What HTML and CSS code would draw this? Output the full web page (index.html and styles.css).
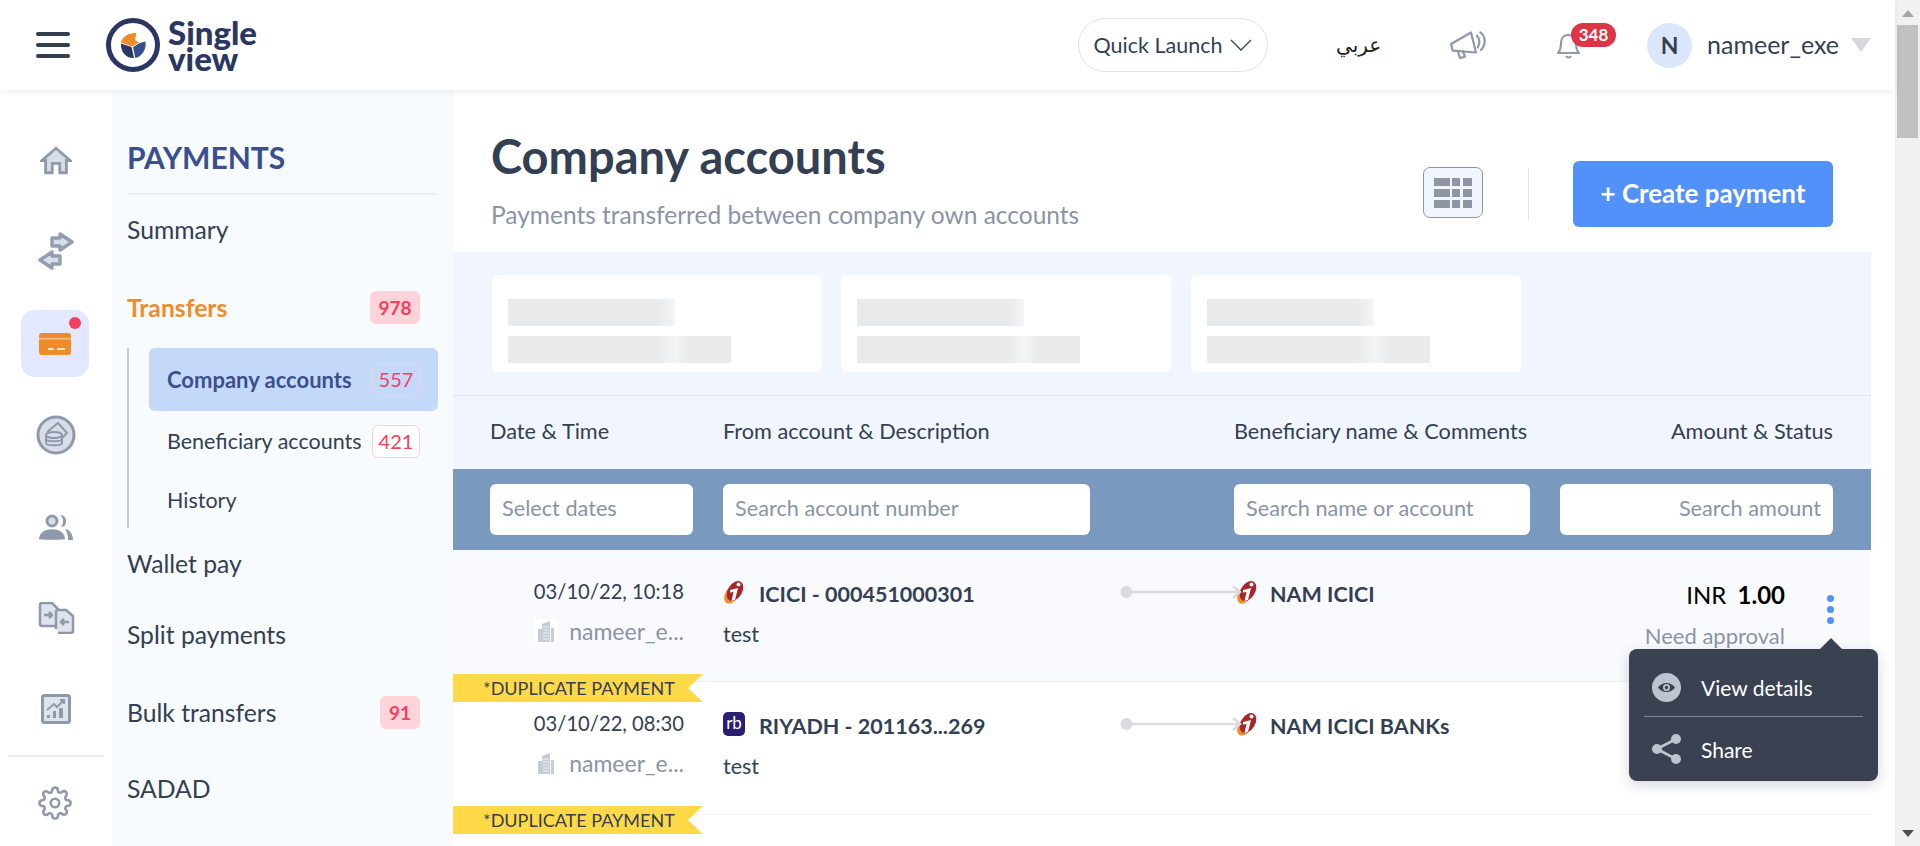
FILE: index.html
```html
<!DOCTYPE html>
<html lang="en">
<head>
  <meta charset="UTF-8">
  <title>Single View - Company accounts</title>
  <link rel="stylesheet" href="styles.css">
</head>
<body>
  <div class="viewport">
    <div class="page">
      <!-- top bar -->
      <header class="topbar">
        <div class="burger"><span></span><span></span><span></span></div>
        <div class="logo">
          <svg width="56" height="56" viewBox="0 0 56 56">
            <circle cx="28" cy="28" r="24.5" fill="none" stroke="#2a3663" stroke-width="5"/>
            <path d="M16 25.5 C17 19.5 24 15.5 31.5 16 L30 23 L34 25.5 L27 29.5 Z" fill="#ee8c2b"/>
            <path d="M16 26.5 L26.5 30 L29 41 C21 41.5 15.5 35 16 26.5 Z" fill="#2a3663"/>
            <path d="M34.5 26 L40.3 24.5 C42 31 37.5 39.5 30.3 41 L28 30.3 Z" fill="#35508f"/>
          </svg>
          <div class="logo-text">Single<br>view</div>
        </div>
        <div class="top-right">
          <div class="quick">Quick Launch
            <svg width="22" height="12" viewBox="0 0 22 12"><path d="M1 1 L11 11 L21 1" fill="none" stroke="#333f53" stroke-width="1.3"/></svg>
          </div>
          <div class="lang">عربي</div>
          <svg class="megaphone" width="37" height="28" viewBox="0 0 37 28" fill="none" stroke="#8e99ab" stroke-width="2.2" stroke-linejoin="round" stroke-linecap="round">
            <path d="M1 13 L21 1.5 L26 21.5 L2.7 19.7 Z"/>
            <path d="M7.7 20 L10 27 L15 25.7 L13 20.5"/>
            <path d="M27 4.7 C30 8 30 13 27.7 16.3 M30.3 1.3 C36 5 36 14 31 19"/>
          </svg>
          <div class="bell">
            <svg width="25" height="28" viewBox="0 0 25 28" fill="none" stroke="#8e99ab" stroke-width="2.2" stroke-linejoin="round">
              <path d="M2 22 C5 19 5 16 5 12 C5 7 8 4 12 4 C17 4 20 7 20 12 C20 16 20 19 23 22 Z"/>
              <path d="M10 25 C11 27 14 27 15 25"/>
            </svg>
            <span class="bell-count">348</span>
          </div>
          <div class="avatar">N</div>
          <div class="username">nameer_exe</div>
          <div class="caret"></div>
        </div>
      </header>

      <div class="body-row">
        <!-- icon rail -->
        <nav class="rail">
          <div class="rail-item rail-home">
            <svg width="32" height="29" viewBox="0 0 34 30" fill="#d8dee8" stroke="#8e99ab" stroke-width="3"><path d="M2 15 L17 2 L32 15 H28 V28 H21 V18 H13 V28 H6 V15 Z"/></svg>
          </div>
          <div class="rail-item">
            <svg width="36" height="38" viewBox="0 0 36 38" fill="#d8dee8" stroke="#929daf" stroke-width="3.4" stroke-linejoin="round"><path d="M14 6 H22 V2 L34 10 L22 18 V14 H14 Z"/><path d="M22 24 H14 V20 L2 28 L14 36 V32 H22 Z"/></svg>
          </div>
          <div class="rail-item rail-mid">
            <div class="rail-active">
              <span class="rail-dot"></span>
              <svg width="32" height="22" viewBox="0 0 32 22"><rect width="32" height="22" rx="3" fill="#ee8c2b"/><rect y="5" width="32" height="1.5" fill="#f7c48f"/><rect x="9" y="15" width="6" height="2" fill="#fbe3c9"/><rect x="18" y="15" width="8" height="2" fill="#fbe3c9"/></svg>
            </div>
          </div>
          <div class="rail-item rail-mid">
            <svg width="40" height="40" viewBox="0 0 40 40" fill="none" stroke="#8e99ab" stroke-width="2">
              <circle cx="20" cy="20" r="18" fill="#d8dee8" stroke-width="3"/>
              <path d="M11 17 L22 8 L31 18 L26 23"/>
              <ellipse cx="18" cy="20" rx="8" ry="3"/>
              <path d="M10 20 V28 C10 31 26 31 26 28 V20 M10 24 C10 27 26 27 26 24"/>
            </svg>
          </div>
          <div class="rail-item rail-low">
            <svg width="34" height="26" viewBox="0 0 34 26" fill="#8e99ab">
              <circle cx="13" cy="7" r="5" fill="#d8dee8" stroke="#8e99ab" stroke-width="3"/>
              <path d="M0 25 C0 12 26 12 26 25 C26 26 0 26 0 25 Z"/>
              <path d="M21 1 C29 1 29 13 22 13 C25 10 25 4 21 1 Z"/>
              <path d="M26 15 C31 16 34 20 34 26 H29 C29 21 28 18 26 15 Z"/>
            </svg>
          </div>
          <div class="rail-item rail-low">
            <svg width="37" height="32" viewBox="0 0 37 32" fill="#dfe4ec" stroke="#8e99ab" stroke-width="2.5" stroke-linejoin="round">
              <path d="M2 3 Q2 1 4 1 H14 L20 7 V22 Q20 24 18 24 H4 Q2 24 2 22 Z"/>
              <path d="M18 27 V10 Q18 8 20 8 H28 L35 14 V29 Q35 31 33 31 H20" />
              <path d="M6 13 H14 M11 10 L14 13 L11 16" fill="none"/>
              <path d="M31 20 H23 M26 17 L23 20 L26 23" fill="none"/>
            </svg>
          </div>
          <div class="rail-item rail-low">
            <svg width="30" height="30" viewBox="0 0 30 30">
              <rect x="1.5" y="1.5" width="27" height="27" rx="2" fill="#dfe4ec" stroke="#8e99ab" stroke-width="3"/>
              <path d="M6 16 L13 10 L16 13 L23 6 M19 6 H23 V10" fill="none" stroke="#8e99ab" stroke-width="2"/>
              <path d="M6 24 V21 H9 V24 Z M12 24 V17 H15 V24 Z M18 24 V14 H22 V24 Z" fill="#8e99ab"/>
            </svg>
          </div>
          <div class="rail-line"></div>
          <div class="rail-gear">
            <svg width="34" height="34" viewBox="0 0 24 24" fill="none" stroke="#8e99ab" stroke-width="1.8"><circle cx="12" cy="12" r="3"/><path d="M19.4 15a1.65 1.65 0 0 0 .33 1.82l.06.06a2 2 0 0 1 0 2.83 2 2 0 0 1-2.83 0l-.06-.06a1.65 1.65 0 0 0-1.82-.33 1.65 1.65 0 0 0-1 1.51V21a2 2 0 0 1-2 2 2 2 0 0 1-2-2v-.09A1.65 1.65 0 0 0 9 19.4a1.65 1.65 0 0 0-1.82.33l-.06.06a2 2 0 0 1-2.83 0 2 2 0 0 1 0-2.83l.06-.06a1.65 1.65 0 0 0 .33-1.82 1.65 1.65 0 0 0-1.51-1H3a2 2 0 0 1-2-2 2 2 0 0 1 2-2h.09A1.65 1.65 0 0 0 4.6 9a1.65 1.65 0 0 0-.33-1.82l-.06-.06a2 2 0 0 1 0-2.83 2 2 0 0 1 2.83 0l.06.06a1.65 1.65 0 0 0 1.82.33H9a1.65 1.65 0 0 0 1-1.51V3a2 2 0 0 1 2-2 2 2 0 0 1 2 2v.09a1.65 1.65 0 0 0 1 1.51 1.65 1.65 0 0 0 1.82-.33l.06-.06a2 2 0 0 1 2.83 0 2 2 0 0 1 0 2.83l-.06.06a1.65 1.65 0 0 0-.33 1.82V9a1.65 1.65 0 0 0 1.51 1H21a2 2 0 0 1 2 2 2 2 0 0 1-2 2h-.09a1.65 1.65 0 0 0-1.51 1z"/></svg>
          </div>
        </nav>

        <!-- section menu -->
        <aside class="subnav">
          <h2 class="subnav-title">PAYMENTS</h2>
          <div class="subnav-list">
            <div class="nav-row">Summary</div>
            <div class="nav-row nav-open">Transfers <span class="count">978</span></div>
            <div class="tree">
              <div class="tree-item tree-active">Company accounts <span class="count-line">557</span></div>
              <div class="tree-item">Beneficiary accounts <span class="count-line count-white">421</span></div>
              <div class="tree-item">History</div>
            </div>
            <div class="nav-row">Wallet pay</div>
            <div class="nav-row">Split payments</div>
            <div class="nav-row">Bulk transfers <span class="count">91</span></div>
            <div class="nav-row">SADAD</div>
          </div>
        </aside>

        <!-- main content -->
        <main class="content">
          <section class="page-head">
            <div>
              <h1>Company accounts</h1>
              <p>Payments transferred between company own accounts</p>
            </div>
            <div class="head-actions">
              <div class="grid-btn">
                <svg width="38" height="30" viewBox="0 0 38 30" fill="#8e96a6"><rect width="16" height="8"/><rect x="18" width="8" height="8"/><rect x="29" width="9" height="8"/><rect y="11" width="16" height="8"/><rect x="18" y="11" width="8" height="8"/><rect x="29" y="11" width="9" height="8"/><rect y="22" width="16" height="8"/><rect x="18" y="22" width="8" height="8"/><rect x="29" y="22" width="9" height="8"/></svg>
              </div>
              <div class="head-divider"></div>
              <button class="create-btn">+ Create payment</button>
            </div>
          </section>

          <section class="stats">
            <div class="stat-card"><div class="bone bone-short"></div><div class="bone bone-long"></div></div>
            <div class="stat-card"><div class="bone bone-short"></div><div class="bone bone-long"></div></div>
            <div class="stat-card"><div class="bone bone-short"></div><div class="bone bone-long"></div></div>
          </section>

          <div class="cols table-head">
            <div>Date &amp; Time</div>
            <div>From account &amp; Description</div>
            <div></div>
            <div>Beneficiary name &amp; Comments</div>
            <div class="right">Amount &amp; Status</div>
          </div>

          <div class="cols table-filter">
            <input type="text" placeholder="Select dates">
            <input type="text" placeholder="Search account number">
            <div></div>
            <input type="text" placeholder="Search name or account">
            <input type="text" class="right" placeholder="Search amount">
          </div>

          <div class="cols row row-tint">
            <div class="cell-date">
              <div class="date">03/10/22, 10:18</div>
              <div class="maker">
                <svg class="tower tower-box" width="24" height="24" viewBox="0 0 24 24"><path d="M4 23 V10 H8 V5 L16 2 V23 Z M17 23 V9 H20 V23 Z" fill="#c5ccd8"/><path d="M9 8 H15 M9 11 H15 M9 14 H15 M9 17 H15 M9 20 H15" stroke="#eef0f4" stroke-width="1"/></svg>
                <span>nameer_e...</span>
              </div>
            </div>
            <div>
              <div class="acct">
                <svg width="22" height="24" viewBox="0 0 22 24"><ellipse cx="9" cy="14" rx="6.5" ry="10.5" transform="rotate(32 9 14)" fill="#ee8c2b"/><ellipse cx="12" cy="11" rx="7" ry="11" transform="rotate(32 12 11)" fill="#a6262a"/><path d="M7 10 L15 8 L12 20 L8.5 21 L10.5 12 L7 12.5 Z" fill="#fff"/><circle cx="15.5" cy="4.5" r="2" fill="#fff"/></svg>
                <span class="acct-name">ICICI - 000451000301</span>
              </div>
              <div class="note">test</div>
            </div>
            <div class="link">
              <svg width="122" height="16" viewBox="0 0 122 16"><circle cx="6.5" cy="8" r="6" fill="#d9dbdf"/><path d="M12 8 H120 M113 2 L120 8 L113 14" fill="none" stroke="#d9dbdf" stroke-width="2.4"/></svg>
            </div>
            <div>
              <div class="acct acct-to">
                <svg width="22" height="24" viewBox="0 0 22 24"><ellipse cx="9" cy="14" rx="6.5" ry="10.5" transform="rotate(32 9 14)" fill="#ee8c2b"/><ellipse cx="12" cy="11" rx="7" ry="11" transform="rotate(32 12 11)" fill="#a6262a"/><path d="M7 10 L15 8 L12 20 L8.5 21 L10.5 12 L7 12.5 Z" fill="#fff"/><circle cx="15.5" cy="4.5" r="2" fill="#fff"/></svg>
                <span class="acct-name">NAM ICICI</span>
              </div>
            </div>
            <div class="cell-amount">
              <div>
                <div class="amount">INR <b>1.00</b></div>
                <div class="status">Need approval</div>
              </div>
              <div class="dots"><i></i><i></i><i></i></div>
            </div>
            <div class="ribbon">*DUPLICATE PAYMENT</div>

            <!-- row actions menu, open on first row -->
            <div class="menu">
              <div class="menu-item menu-view">
                <svg width="29" height="29" viewBox="0 0 29 29"><circle cx="14.5" cy="14.5" r="14.5" fill="#bcc4ce"/><path d="M6 14.5 C10 8.5 19 8.5 23 14.5 C19 20.5 10 20.5 6 14.5 Z" fill="#3a4252"/><circle cx="14.5" cy="14.5" r="3.5" fill="#bcc4ce"/><circle cx="14.5" cy="14.5" r="1.7" fill="#3a4252"/></svg>
                <span>View details</span>
              </div>
              <div class="menu-item menu-share">
                <svg width="29" height="30" viewBox="0 0 29 30" fill="#bcc4ce"><circle cx="5" cy="15" r="5"/><circle cx="24" cy="5" r="5"/><circle cx="24" cy="25" r="5"/><path d="M5 15 L24 5 M5 15 L24 25" stroke="#bcc4ce" stroke-width="2.6"/></svg>
                <span>Share</span>
              </div>
            </div>
          </div>

          <div class="cols row">
            <div class="cell-date">
              <div class="date">03/10/22, 08:30</div>
              <div class="maker">
                <svg class="tower" width="24" height="24" viewBox="0 0 24 24"><path d="M4 23 V10 H8 V5 L16 2 V23 Z M17 23 V9 H20 V23 Z" fill="#c5ccd8"/><path d="M9 8 H15 M9 11 H15 M9 14 H15 M9 17 H15 M9 20 H15" stroke="#eef0f4" stroke-width="1"/></svg>
                <span>nameer_e...</span>
              </div>
            </div>
            <div>
              <div class="acct">
                <span class="rb-logo">rb</span>
                <span class="acct-name">RIYADH - 201163...269</span>
              </div>
              <div class="note">test</div>
            </div>
            <div class="link">
              <svg width="122" height="16" viewBox="0 0 122 16"><circle cx="6.5" cy="8" r="6" fill="#d9dbdf"/><path d="M12 8 H120 M113 2 L120 8 L113 14" fill="none" stroke="#d9dbdf" stroke-width="2.4"/></svg>
            </div>
            <div>
              <div class="acct acct-to">
                <svg width="22" height="24" viewBox="0 0 22 24"><ellipse cx="9" cy="14" rx="6.5" ry="10.5" transform="rotate(32 9 14)" fill="#ee8c2b"/><ellipse cx="12" cy="11" rx="7" ry="11" transform="rotate(32 12 11)" fill="#a6262a"/><path d="M7 10 L15 8 L12 20 L8.5 21 L10.5 12 L7 12.5 Z" fill="#fff"/><circle cx="15.5" cy="4.5" r="2" fill="#fff"/></svg>
                <span class="acct-name">NAM ICICI BANKs</span>
              </div>
            </div>
            <div class="cell-amount">
              <div>
                <div class="amount">INR <b>1.00</b></div>
                <div class="status">Need approval</div>
              </div>
              <div class="dots"><i></i><i></i><i></i></div>
            </div>
            <div class="ribbon">*DUPLICATE PAYMENT</div>
          </div>
        </main>
        <div class="content-gutter"></div>
      </div>
    </div>

    <!-- scrollbar -->
    <div class="scrollbar">
      <span class="sb-up"></span>
      <span class="sb-thumb"></span>
      <span class="sb-down"></span>
    </div>
  </div>
</body>
</html>
```

FILE: styles.css
```css
html, body {
  margin: 0;
  padding: 0;
  height: 846px;
  overflow: hidden;
  font-family: 'Lato', 'Noto Sans', sans-serif;
  color: #333f53;
  background-color: #fff;
}

.viewport {
  display: flex;
  height: 846px;
}

.page {
  flex: 1;
  min-width: 0;
  display: flex;
  flex-direction: column;
}

/* top bar */
.topbar {
  height: 90px;
  flex: none;
  display: flex;
  align-items: center;
  padding: 0 24px 0 36px;
  background-color: #fff;
  box-shadow: 0 1px 6px rgba(40, 50, 80, 0.1);
  position: relative;
  z-index: 5;
}

.burger {
  width: 34px;
  display: flex;
  flex-direction: column;
  gap: 7px;
}

.burger span {
  height: 4px;
  border-radius: 2px;
  background-color: #333f4f;
}

.logo {
  display: flex;
  align-items: center;
  gap: 7px;
  margin-left: 35px;
}

.logo-text {
  font-size: 33px;
  font-weight: 900;
  line-height: 26px;
  color: #2a3663;
}

.top-right {
  margin-left: auto;
  display: flex;
  align-items: center;
}

.quick {
  width: 190px;
  height: 54px;
  box-sizing: border-box;
  display: flex;
  align-items: center;
  justify-content: center;
  gap: 8px;
  border: 1px solid #dfe3ec;
  border-radius: 27px;
  font-size: 21.5px;
}

.lang {
  margin-left: 68px;
  width: 44px;
  font-family: 'DejaVu Sans', sans-serif;
  font-size: 20px;
  color: #222;
}

.megaphone {
  margin-left: 70px;
}

.bell {
  margin-left: 69px;
  width: 60px;
  height: 28px;
  position: relative;
}

.bell-count {
  position: absolute;
  left: 15px;
  top: -8px;
  width: 45px;
  height: 24px;
  border-radius: 12px;
  background-color: #dc3545;
  color: #fff;
  font-size: 17px;
  font-weight: 700;
  line-height: 24px;
  text-align: center;
}

.avatar {
  margin-left: 31px;
  width: 45px;
  height: 45px;
  border-radius: 50%;
  background-color: #dbe6fb;
  font-size: 23px;
  font-weight: 700;
  line-height: 45px;
  text-align: center;
}

.username {
  margin-left: 15px;
  width: 132px;
  padding-bottom: 2px;
  font-size: 25px;
}

.caret {
  margin-left: 12px;
  width: 0;
  height: 0;
  border-left: 10.5px solid transparent;
  border-right: 10.5px solid transparent;
  border-top: 14px solid #d5d8dc;
}

/* rail */
.body-row {
  flex: 1;
  min-height: 0;
  display: flex;
}

.rail {
  width: 112px;
  flex: none;
  box-sizing: border-box;
  padding-top: 24px;
  display: flex;
  flex-direction: column;
  align-items: center;
}

.rail-item {
  height: 91px;
  flex: none;
  display: flex;
  align-items: center;
  justify-content: center;
}

.rail-home svg {
  margin-top: 2px;
}

.rail-mid > * {
  margin-top: 4px;
}

.rail-low svg {
  margin-top: 7px;
}

.rail-active {
  width: 68px;
  height: 67px;
  margin-right: 2px;
  border-radius: 14px;
  background-color: #e2e8ff;
  display: flex;
  align-items: center;
  justify-content: center;
  position: relative;
}

.rail-dot {
  position: absolute;
  top: 7px;
  right: 8px;
  width: 12px;
  height: 12px;
  border-radius: 50%;
  background-color: #f43f5e;
}

.rail-line {
  width: 94px;
  height: 2px;
  margin-top: 4px;
  background-color: #ebecef;
}

.rail-gear {
  margin-top: 29px;
  margin-right: 2px;
}

/* section menu */
.subnav {
  width: 341px;
  flex: none;
  box-sizing: border-box;
  padding: 0 15px;
  background-color: #f8fbfd;
}

.subnav-title {
  margin: 0;
  height: 105px;
  box-sizing: border-box;
  padding-top: 48px;
  border-bottom: 2px solid #ebeef2;
  font-size: 30px;
  font-weight: 700;
  line-height: 38px;
  color: #3a4f8f;
}

.subnav-list {
  display: grid;
  grid-template-rows: 70px 83px 180px 72px 71px 85px 66px;
  font-size: 24.7px;
}

.nav-row {
  display: flex;
  align-items: center;
  justify-content: space-between;
  padding: 0 18px 2px 0;
}

.nav-open {
  padding: 1px 18px 0 0;
  color: #ee8c2b;
  font-weight: 700;
}

.count {
  min-width: 40px;
  height: 33px;
  padding: 0 5px;
  box-sizing: border-box;
  border-radius: 6px;
  background-color: #ffd3da;
  color: #f43f5e;
  font-size: 19px;
  font-weight: 700;
  line-height: 33px;
  text-align: center;
}

.nav-open .count {
  width: 50px;
}

.tree {
  display: grid;
  grid-template-rows: 63px 62px 55px;
  padding-left: 20px;
  border-left: 2px solid #c3cad8;
  font-size: 21.5px;
}

.tree-item {
  display: flex;
  align-items: center;
  justify-content: space-between;
  padding: 0 18px 2px 18px;
  border-radius: 6px;
}

.tree-active {
  padding-bottom: 0;
  background-color: #c4d9fa;
  color: #3a4f8f;
  font-size: 22px;
  font-weight: 700;
}

.count-line {
  width: 48px;
  height: 33px;
  flex: none;
  box-sizing: border-box;
  border: 1px solid #f9cdd9;
  border-radius: 6px;
  color: #f43f5e;
  font-size: 20px;
  font-weight: 400;
  line-height: 31px;
  text-align: center;
}

.count-white {
  background-color: #fff;
}

/* main */
.content {
  width: 1418px;
  flex: none;
  min-width: 0;
}

.content-gutter {
  flex: 1;
}

.page-head {
  height: 162px;
  box-sizing: border-box;
  padding: 40px 38px 0;
  display: flex;
  justify-content: space-between;
  align-items: flex-start;
}

.page-head h1 {
  margin: 0;
  font-size: 47px;
  font-weight: 700;
  line-height: 52px;
}

.page-head p {
  margin: 17px 0 0;
  font-size: 24.5px;
  line-height: 32px;
  color: #8a94a6;
}

.head-actions {
  margin-top: 31px;
  display: flex;
  align-items: center;
  gap: 45px;
}

.grid-btn {
  width: 60px;
  height: 51px;
  margin-top: -3px;
  box-sizing: border-box;
  display: flex;
  align-items: center;
  justify-content: center;
  border: 1px solid #8e96a6;
  border-radius: 7px;
  background-color: #f1f5fd;
}

.head-divider {
  width: 1px;
  height: 52px;
  margin-right: -1px;
  background-color: #dfe3ec;
}

.create-btn {
  width: 260px;
  height: 66px;
  padding: 0 0 3px;
  border: none;
  border-radius: 6px;
  background-color: #5391fa;
  color: #fff;
  font-family: inherit;
  font-size: 25.9px;
  font-weight: 700;
}

.stats {
  height: 144px;
  box-sizing: border-box;
  padding: 23px 39px 0;
  display: flex;
  gap: 19px;
  background-color: #f1f5fd;
  border-bottom: 1px solid #dfe4ee;
}

.stat-card {
  width: 330px;
  height: 97px;
  box-sizing: border-box;
  padding: 24px 16px 0;
  border-radius: 6px;
  background-color: #fff;
}

.stat-card:last-child {
  margin-left: 1px;
}

.bone {
  height: 27px;
  background: linear-gradient(90deg, #e9eaec 0, #e9eaec 151px, #f5f5f5 167px, #e9eaec 182px);
}

.bone-short {
  width: 167px;
}

.bone-long {
  width: 223px;
  margin-top: 10px;
}

/* table */
.cols {
  display: grid;
  grid-template-columns: 203px 367px 84px 296px 273px;
  column-gap: 30px;
  padding-left: 37px;
}

.right {
  text-align: right;
}

.table-head {
  height: 73px;
  box-sizing: border-box;
  padding-bottom: 3px;
  align-items: center;
  background-color: #f1f5fd;
  font-size: 21.7px;
}

.table-filter {
  height: 81px;
  align-items: center;
  background-color: #7a99bf;
}

.table-filter input {
  height: 51px;
  width: 100%;
  box-sizing: border-box;
  padding: 0 12px 4px;
  border: none;
  border-radius: 6px;
  background-color: #fff;
  font-family: inherit;
  font-size: 21.7px;
  color: #333f53;
}

.table-filter input::placeholder {
  color: #8a94a6;
}

.row {
  height: 132px;
  box-sizing: border-box;
  padding-top: 25px;
  align-content: start;
  position: relative;
  border-bottom: 1px solid #f0f2f8;
}

.row + .row {
  height: 133px;
}

.row-tint {
  background-color: #f9fafe;
}

.cell-date {
  padding-right: 9px;
  text-align: right;
}

.date {
  padding-bottom: 1px;
  font-size: 20.2px;
  line-height: 33px;
}

.maker {
  margin-top: 5px;
  display: flex;
  justify-content: flex-end;
  align-items: center;
  gap: 11px;
  font-size: 23px;
  line-height: 34px;
  color: #8a94a6;
}

.tower-box {
  background-color: #fff;
}

.acct {
  display: flex;
  align-items: center;
  gap: 14px;
  height: 34px;
  font-size: 21.5px;
  font-weight: 700;
}

.acct-name {
  padding-top: 3px;
}

.acct-to {
  margin-left: 2px;
  gap: 12px;
}

.rb-logo {
  width: 22px;
  height: 24px;
  border-radius: 5px;
  background-color: #2a2071;
  color: #fff;
  font-size: 17px;
  font-weight: 400;
  line-height: 22px;
  text-align: center;
}

.note {
  margin-top: 8px;
  font-size: 21.5px;
  line-height: 34px;
}

.link {
  height: 34px;
  display: flex;
  align-items: center;
  position: relative;
  z-index: 1;
}

.link svg {
  overflow: visible;
  flex: none;
  margin-top: -1px;
}

.cell-amount {
  display: flex;
  justify-content: flex-end;
  gap: 42px;
  text-align: right;
}

.amount {
  padding-top: 3px;
  font-size: 24px;
  line-height: 34px;
  color: #000;
}

.amount b {
  margin-left: 5px;
}

.status {
  margin-top: 7px;
  font-size: 22px;
  line-height: 34px;
  color: #8a94a6;
}

.dots {
  width: 7px;
  margin-top: 20px;
  margin-right: -1px;
  display: flex;
  flex-direction: column;
  gap: 4px;
}

.dots i {
  width: 7px;
  height: 7px;
  border-radius: 50%;
  background-color: #5391fa;
}

.ribbon {
  position: absolute;
  left: 0;
  top: 124px;
  z-index: 2;
  width: 250px;
  height: 28px;
  box-sizing: border-box;
  padding-left: 30px;
  background-color: #ffd947;
  clip-path: polygon(0 0, 100% 0, 94% 50%, 100% 100%, 0 100%);
  font-size: 18px;
  line-height: 28px;
  white-space: nowrap;
}

/* row menu */
.menu {
  position: absolute;
  top: 99px;
  right: -7px;
  z-index: 4;
  width: 249px;
  height: 132px;
  box-sizing: border-box;
  border-radius: 8px;
  background-color: #3a4252;
  box-shadow: 0 4px 14px rgba(20, 30, 50, 0.18);
  color: #fff;
  font-size: 21px;
}

.menu::before {
  content: "";
  position: absolute;
  top: -11px;
  left: 191px;
  border-left: 11px solid transparent;
  border-right: 11px solid transparent;
  border-bottom: 11px solid #3a4252;
}

.menu-item {
  box-sizing: border-box;
  margin: 0 15px;
  padding-left: 8px;
  display: flex;
  align-items: center;
  gap: 20px;
}

.menu-view {
  height: 68px;
  padding-top: 9px;
  border-bottom: 1px solid #7d8594;
}

.menu-share {
  height: 64px;
}

/* scrollbar */
.scrollbar {
  width: 25px;
  flex: none;
  display: flex;
  flex-direction: column;
  align-items: center;
  background-color: #f1f1f1;
}

.sb-up {
  margin-top: 10px;
  border-left: 6px solid transparent;
  border-right: 6px solid transparent;
  border-bottom: 7px solid #a3a3a3;
}

.sb-thumb {
  width: 21px;
  height: 113px;
  margin-top: 8px;
  background-color: #c1c1c1;
}

.sb-down {
  margin-top: auto;
  margin-bottom: 9px;
  border-left: 6px solid transparent;
  border-right: 6px solid transparent;
  border-top: 7px solid #505050;
}
```
